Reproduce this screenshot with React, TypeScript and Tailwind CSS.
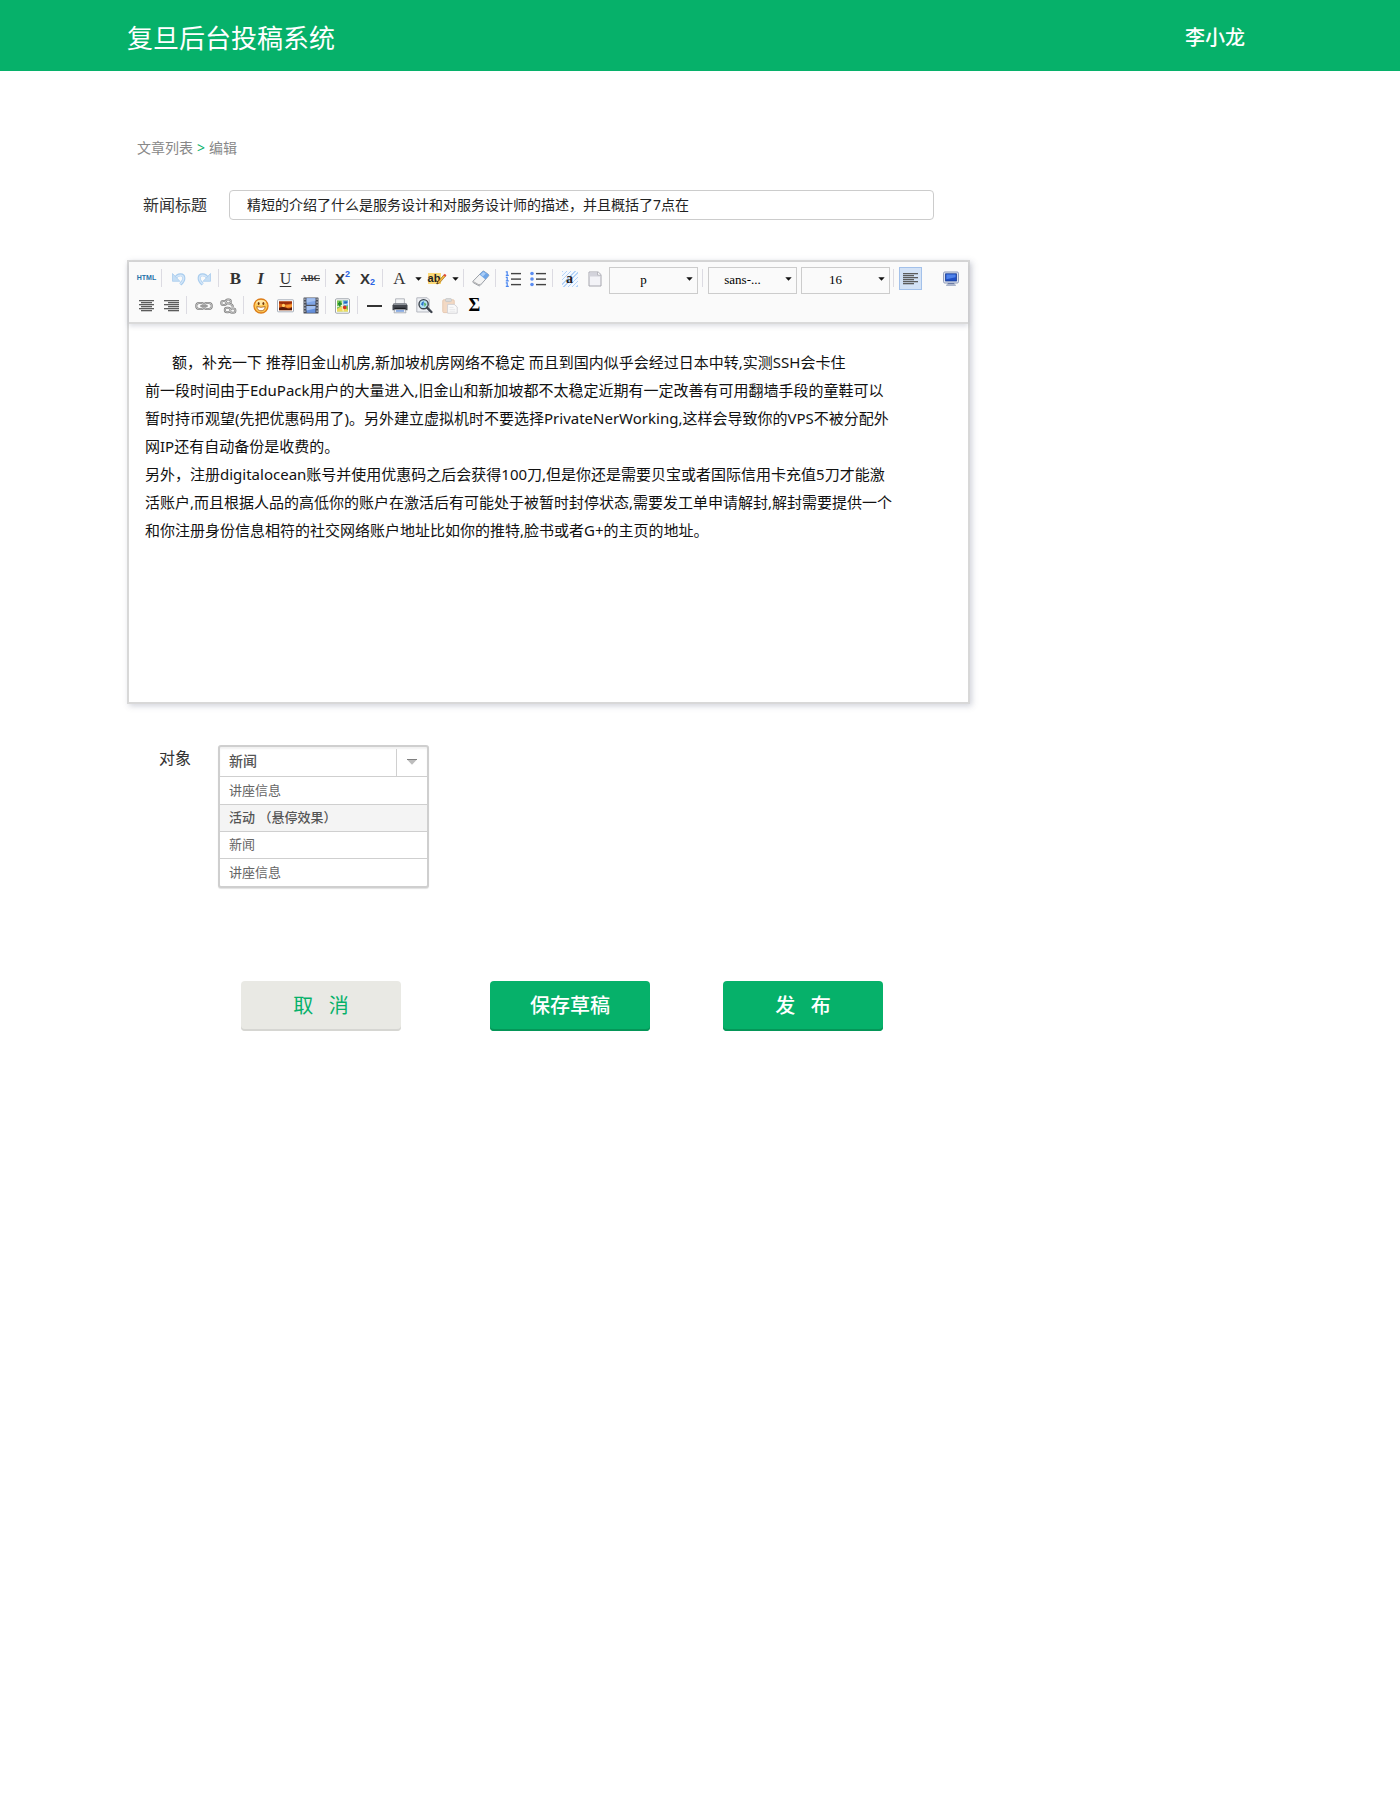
import React, { useState } from "react";

const ARTICLE = [
  "额，补充一下 推荐旧金山机房,新加坡机房网络不稳定 而且到国内似乎会经过日本中转,实测SSH会卡住",
  "前一段时间由于EduPack用户的大量进入,旧金山和新加坡都不太稳定近期有一定改善有可用翻墙手段的童鞋可以",
  "暂时持币观望(先把优惠码用了)。另外建立虚拟机时不要选择PrivateNerWorking,这样会导致你的VPS不被分配外",
  "网IP还有自动备份是收费的。",
  "另外，注册digitalocean账号并使用优惠码之后会获得100刀,但是你还是需要贝宝或者国际信用卡充值5刀才能激",
  "活账户,而且根据人品的高低你的账户在激活后有可能处于被暂时封停状态,需要发工单申请解封,解封需要提供一个",
  "和你注册身份信息相符的社交网络账户地址比如你的推特,脸书或者G+的主页的地址。",
].join("\n");

function Tool({ label, children }: { label: string; children: React.ReactNode }) {
  return (
    <button type="button" aria-label={label} title={label} className="flex h-[23px] w-[25px] shrink-0 items-center justify-center text-[#333]">
      {children}
    </button>
  );
}

function Arrow({ label }: { label: string }) {
  return (
    <button type="button" aria-label={label} className="flex h-[23px] w-3 shrink-0 items-center justify-center">
      <Caret />
    </button>
  );
}

function Caret() {
  return (
    <svg width="7" height="4" viewBox="0 0 7 4" aria-hidden="true">
      <path d="M0.3 0.3h6.4L3.5 3.8z" fill="#111" />
    </svg>
  );
}

function Sep() {
  return <span className="mt-0.5 mr-1 ml-0.5 h-[18px] w-px shrink-0 bg-[#dcdbe2]" />;
}

function ToolSelect({ label, options }: { label: string; options: string[] }) {
  return (
    <span className="relative block w-[89px] shrink-0">
      <select
        aria-label={label}
        className="block h-[27px] w-full appearance-none border border-[#ccc] bg-[#fafafa] pr-5 pb-0.5 text-center font-['Liberation_Serif',serif] text-[13px] text-black outline-none [text-align-last:center]"
      >
        {options.map((o) => (
          <option key={o}>{o}</option>
        ))}
      </select>
      <span className="pointer-events-none absolute top-[10px] right-[5px]">
        <Caret />
      </span>
    </span>
  );
}

function Undo({ flip = false }: { flip?: boolean }) {
  return (
    <svg width="16" height="14" viewBox="0 0 16 14" fill="none" aria-hidden="true">
      <g transform={flip ? "matrix(-1 0 0 1 16 0)" : undefined}>
        <path d="M4 6.6C6.500 1.800 12.600 1.600 12.900 6c.1 2.600-1.600 4.600-3.600 6.300" stroke="#a9cdee" strokeWidth="3" />
        <path d="M4.400 6.300C6.800 2.400 12.200 2.200 12.600 6c.1 2.400-1.500 4.300-3.200 5.900" stroke="#d3e6f9" strokeWidth="1.400" />
        <path d="M1.500 1.500v7.800h7.400z" fill="#c5def5" stroke="#a9cdee" strokeWidth="0.800" />
      </g>
    </svg>
  );
}

function Lines({ kind }: { kind: "left" | "center" | "right" }) {
  const short = kind === "left" ? 0 : kind === "center" ? 2 : 4;
  return (
    <svg width="15" height="12" viewBox="0 0 15 12" aria-hidden="true">
      {[0, 1, 2, 3, 4, 5].map((i) => (
        <rect key={i} x={i % 2 ? short : 0} y={i * 2} width={i % 2 ? 11 : 15} height="1.300" fill="#5c5c5c" />
      ))}
    </svg>
  );
}

function Eraser() {
  return (
    <svg width="18" height="17" viewBox="0 0 18 17" aria-hidden="true">
      <path d="M1 11.2 10.5 1.4Q11.2.7 12 1.3l4.4 3.1q.8.6.2 1.4l-8.4 9.6q-.6.7-1.4.3L1.3 12.7q-.9-.7-.3-1.5z" fill="#f4f4f4" stroke="#8f949c" strokeWidth="0.9" />
      <path d="m7.5 4.5 3.2-3.2q.6-.5 1.3 0l4.6 3.2q.6.6.1 1.3l-3.2 3.8z" fill="#6fa6e8" />
      <path d="m8.6 4.4 2.4-2.2q.4-.3.8 0l2 1.4-2.9 3z" fill="#a9cdf7" />
      <path d="m1.4 11.6 5.8 3.4 1-1.2" fill="none" stroke="#a5a5a5" strokeWidth="0.9" />
    </svg>
  );
}

function ListIcon({ ordered = false }: { ordered?: boolean }) {
  return (
    <svg width="16" height="16" viewBox="0 0 16 16" aria-hidden="true">
      {[2.5, 8, 13.5].map((y) => (
        <g key={y}>
          <rect x="6" y={y - 0.6} width="10" height="1.4" fill="#444" />
          {ordered ? (
            <path d={`M.8 ${y - 1.6}h1.4v3.2M.8 ${y + 1.8}h3`} stroke="#4a86f0" fill="none" strokeWidth="1.2" />
          ) : (
            <circle cx="2" cy={y} r="1.8" fill="#5b8df2" />
          )}
        </g>
      ))}
    </svg>
  );
}

function Doc() {
  return (
    <svg width="14" height="16" viewBox="0 0 14 16" aria-hidden="true">
      <path d="M1 1h9.2L13 3.6V15H1z" fill="#f3f3f7" stroke="#a6a6ae" />
      <path d="M1.5 1.5h8v3h3v1h-11z" fill="#d3d3db" />
      <path d="M9.6 1v3.2H13" fill="#fff" stroke="#a6a6ae" strokeWidth="0.8" />
    </svg>
  );
}

function Monitor() {
  return (
    <svg width="16" height="16" viewBox="0 0 16 16" aria-hidden="true">
      <rect x="0.6" y="1" width="14.8" height="11" rx="1.2" fill="#e6ebf5" stroke="#8a97b5" />
      <rect x="2.6" y="2.8" width="10.8" height="7.2" fill="#1f4fc4" stroke="#173a94" strokeWidth="0.8" />
      <path d="M3.4 3.6h9.2v2.6l-9.2 2z" fill="#4f82ea" />
      <path d="M5 12h6l1 1.6H4z" fill="#6b7ca6" />
      <rect x="3" y="13.4" width="10" height="1.5" rx="0.6" fill="#aab4ca" />
    </svg>
  );
}

function ChainLink() {
  return (
    <svg width="18" height="10" viewBox="0 0 18 10" fill="none" aria-hidden="true">
      <rect x="1.2" y="2" width="8" height="6" rx="3" stroke="#7e7e7e" strokeWidth="2" />
      <rect x="8.800" y="2" width="8" height="6" rx="3" stroke="#7e7e7e" strokeWidth="2" />
      <rect x="1.2" y="2" width="8" height="6" rx="3" stroke="#dcdcdc" strokeWidth="0.7" />
      <rect x="8.800" y="2" width="8" height="6" rx="3" stroke="#dcdcdc" strokeWidth="0.7" />
      <path d="M5.5 5h7" stroke="#777" strokeWidth="2.2" />
      <path d="M6 5h6" stroke="#cfcfcf" strokeWidth="0.8" />
    </svg>
  );
}

function Unlink() {
  return (
    <svg width="17" height="16" viewBox="0 0 17 16" fill="none" aria-hidden="true">
      {[
        { c: "#7e7e7e", w: 2 },
        { c: "#dedede", w: 0.7 },
      ].map(({ c, w }) => (
        <g key={c} stroke={c} strokeWidth={w}>
          <rect x="1.2" y="3" width="5" height="4" rx="2" />
          <rect x="5.800" y="1.500" width="5" height="4" rx="2" />
          <rect x="4.8" y="9.800" width="5.400" height="4.400" rx="2.200" />
          <rect x="10" y="10.400" width="5.400" height="4.400" rx="2.200" />
          <path d="M9.500 6q3.400.2 3.300 3" />
        </g>
      ))}
    </svg>
  );
}

function Smile() {
  return (
    <svg width="16" height="16" viewBox="0 0 16 16" aria-hidden="true">
      <circle cx="8" cy="8" r="7" fill="#ffcb58" stroke="#dd7d18" strokeWidth="1.3" />
      <ellipse cx="8" cy="4.6" rx="4.8" ry="2.6" fill="#ffe7a6" />
      <ellipse cx="5.6" cy="5.6" rx="1" ry="1.5" fill="#7a3b05" />
      <ellipse cx="10.4" cy="5.6" rx="1" ry="1.5" fill="#7a3b05" />
      <path d="M3.8 8.600Q8 10 12.200 8.600 11.800 12.800 8 12.800T3.800 8.600z" fill="#fff" stroke="#a65a14" strokeWidth="0.8" />
    </svg>
  );
}

function Picture() {
  return (
    <svg width="17" height="14" viewBox="0 0 17 14" aria-hidden="true">
      <rect x="0.5" y="0.8" width="16" height="12" rx="0.6" fill="#fff" stroke="#a9b0bb" />
      <rect x="2" y="2.4" width="13" height="8.8" fill="#d9641a" />
      <path d="M2 2.4h13v2L8 5.6 2 4.600z" fill="#9a2f0c" />
      <circle cx="6.500" cy="6.4" r="1.6" fill="#ffd06a" />
      <path d="M8 6.500l7-1.300v2.600l-5 1z" fill="#f79a32" />
      <path d="M2 8.800q4-1.600 7 0t6-.6v3H2z" fill="#5a1a08" />
    </svg>
  );
}

function Film() {
  return (
    <svg width="16" height="17" viewBox="0 0 16 17" aria-hidden="true">
      <rect x="0.5" y="0.5" width="15" height="16" rx="0.6" fill="#4a4e58" />
      <rect x="3.6" y="1.2" width="8.8" height="6.6" fill="#7fa5e6" />
      <rect x="3.6" y="9" width="8.8" height="6.8" fill="#6590dc" />
      <path d="M3.6 1.2h8.8v2.5l-8.8 2zM3.6 9h8.8v2.5l-8.8 2z" fill="#a3c0f0" />
      {[1.5, 4.5, 7.5, 10.5, 13.5].map((y) => (
        <g key={y} fill="#c9cdd6">
          <rect x="1.3" y={y} width="1.2" height="1.4" />
          <rect x="13.5" y={y} width="1.2" height="1.4" />
        </g>
      ))}
    </svg>
  );
}

function MapIcon() {
  return (
    <svg width="15" height="16" viewBox="0 0 15 16" aria-hidden="true">
      <rect x="0.5" y="0.8" width="14" height="14.4" rx="1.2" fill="#fff" stroke="#9fa4ab" />
      <rect x="2" y="2.4" width="11" height="11" fill="#7cc653" />
      <path d="M7.5 2.4H13v5L9 9z" fill="#66b4ea" />
      <path d="M2 11l5-3 6 4v1.400H2z" fill="#f0d95e" />
      <path d="M7.200 2.4l1 11M2 8.800l11-3" stroke="#fff" strokeWidth="0.8" />
      <path d="M4.800 3.400v5M3 5.900h3.600" stroke="#1f8a35" strokeWidth="1.6" />
      <circle cx="9.7" cy="9.4" r="1.800" fill="#d62f22" />
      <rect x="9.200" y="3.4" width="3" height="2" fill="#2a63b8" />
    </svg>
  );
}

function Printer() {
  return (
    <svg width="16" height="16" viewBox="0 0 16 16" aria-hidden="true">
      <path d="M3.6.8h8.8V6H3.6z" fill="#f4f5f7" stroke="#a3a7ad" strokeWidth="0.8" />
      <path d="M1.6 5.400h12.800l1.100 2v4.800H.5V7.400z" fill="#43474e" />
      <path d="M1.8 5.600h12.400l.6 1.400H1.200z" fill="#8d9299" />
      <path d="M2.5 9.800h11v1.600h-11z" fill="#111318" />
      <path d="M2.8 11.400h10.400l.8 3.400H2z" fill="#eceef2" stroke="#9da1a8" strokeWidth="0.8" />
      <path d="M4 12.300h8v1.300H4z" fill="#5f8fdc" />
    </svg>
  );
}

function Preview() {
  return (
    <svg width="17" height="17" viewBox="0 0 17 17" aria-hidden="true">
      <path d="M.8.8h10.400l2 2V15H.8z" fill="#eef0f4" stroke="#b5b8c0" />
      <circle cx="7.6" cy="7.2" r="4.6" fill="#b4e1f4" stroke="#3e444d" strokeWidth="1.4" />
      <path d="M5 7.500q.4-2.800 3-3.200L7.200 9z" fill="#2b74c9" />
      <path d="M8 5.500l2.500 1.500L8.600 10z" fill="#52b25b" />
      <path d="m11 10.600 4.400 4.400" stroke="#3e444d" strokeWidth="2.4" strokeLinecap="round" />
    </svg>
  );
}

function Paste() {
  return (
    <svg width="16" height="16" viewBox="0 0 16 16" aria-hidden="true">
      <rect x="0.8" y="1.8" width="11.4" height="12.8" rx="1" fill="#f3d9c4" stroke="#e6c9b3" />
      <rect x="3.6" y="0.6" width="5.800" height="3" rx="0.8" fill="#dcdcdc" stroke="#c4c4c4" strokeWidth="0.8" />
      <path d="M5.6 6.400h6.600l3 2.600v6.200H5.600z" fill="#fafafa" stroke="#cfcfd4" strokeWidth="0.9" />
      <path d="M7.5 9.400h4M7.500 11.400h5.800M7.500 13.200h5.800" stroke="#e2e2e6" strokeWidth="0.8" />
    </svg>
  );
}

function Highlighter() {
  return (
    <span className="relative flex h-[13px] w-[18px] items-center">
      <span className="flex h-[11px] w-[13px] items-center justify-center bg-[#fbd977] font-['Liberation_Sans',sans-serif] text-[11px] leading-none font-bold text-[#222]">
        ab
      </span>
      <svg className="absolute top-0 left-[7px]" width="12" height="13" viewBox="0 0 12 13" aria-hidden="true">
        <path d="M2 12 3 9.800 8.800 3l1.600 1.300-6 6.800z" fill="#f4b942" stroke="#9b6b1b" strokeWidth="0.7" />
        <path d="m8.400 3.200 1.300-1.500 1.800 1.500-1.200 1.500z" fill="#e2483a" />
        <path d="m1.200 12.300.9-2 1.300 1z" fill="#222" />
      </svg>
    </span>
  );
}

function Toolbar() {
  return (
    <div role="toolbar" aria-label="编辑工具栏" className="border-b-2 border-[#dadada] bg-[#fafafa] px-[5px] py-[5px] shadow-[0_2px_5px_rgba(70,80,110,0.2)]">
      <div className="flex h-[27px] items-start">
        <Tool label="HTML">
          <span className="font-['Liberation_Sans',sans-serif] text-[7px] font-bold text-[#2672a8]">HTML</span>
        </Tool>
        <Sep />
        <Tool label="撤销"><Undo /></Tool>
        <Tool label="重做"><Undo flip /></Tool>
        <Sep />
        <Tool label="加粗"><span className="font-['Liberation_Serif',serif] text-[17px] font-bold">B</span></Tool>
        <Tool label="斜体"><span className="font-['Liberation_Serif',serif] text-[17px] font-bold italic">I</span></Tool>
        <Tool label="下划线"><span className="font-['Liberation_Serif',serif] text-[16px] underline decoration-1 underline-offset-2">U</span></Tool>
        <Tool label="删除线"><span className="font-['Liberation_Serif',serif] text-[9px] font-bold line-through">ABC</span></Tool>
        <Sep />
        <Tool label="上标">
          <span className="flex font-['Liberation_Sans',sans-serif] text-[15px] leading-none font-bold">
            X<span className="text-[9px] leading-[6px] text-[#2b62e3]">2</span>
          </span>
        </Tool>
        <Tool label="下标">
          <span className="flex items-end font-['Liberation_Sans',sans-serif] text-[15px] leading-none font-bold">
            X<span className="text-[9px] leading-[7px] text-[#2b62e3]">2</span>
          </span>
        </Tool>
        <Sep />
        <Tool label="文字颜色"><span className="font-['Liberation_Serif',serif] text-[17px]">A</span></Tool>
        <Arrow label="选择文字颜色" />
        <Tool label="背景颜色"><Highlighter /></Tool>
        <Arrow label="选择背景颜色" />
        <Sep />
        <Tool label="清除格式"><Eraser /></Tool>
        <Sep />
        <Tool label="有序列表"><ListIcon ordered /></Tool>
        <Tool label="无序列表"><ListIcon /></Tool>
        <Sep />
        <Tool label="全选">
          <span className="flex size-4 items-center justify-center bg-[repeating-linear-gradient(135deg,#b5d3f7_0_1px,#f4f9ff_1px_3px)] font-['Liberation_Serif',serif] text-[14px] leading-none font-bold text-[#222]">
            a
          </span>
        </Tool>
        <Tool label="清空文档"><Doc /></Tool>
        <div className="ml-0.5 flex items-start">
          <ToolSelect label="段落格式" options={["p", "h1", "h2"]} />
        </div>
        <span className="mt-0.5 mr-[5px] ml-1 h-[18px] w-px shrink-0 bg-[#dcdbe2]" />
        <div className="flex gap-1">
          <ToolSelect label="字体" options={["sans-...", "serif"]} />
          <ToolSelect label="字号" options={["16", "14", "12"]} />
        </div>
        <span className="mt-0.5 mr-[5px] ml-[3px] h-[18px] w-px shrink-0 bg-[#dcdbe2]" />
        <button type="button" aria-label="左对齐" aria-pressed="true" className="flex size-[23px] shrink-0 items-center justify-center border border-[#a3c1ea] bg-[#d3e2f6]">
          <Lines kind="left" />
        </button>
        <span className="w-4" />
        <Tool label="全屏"><Monitor /></Tool>
      </div>
      <div className="flex h-[23px] items-start">
        <Tool label="居中对齐"><Lines kind="center" /></Tool>
        <Tool label="右对齐"><Lines kind="right" /></Tool>
        <Sep />
        <Tool label="超链接"><ChainLink /></Tool>
        <Tool label="取消链接"><Unlink /></Tool>
        <Sep />
        <Tool label="表情"><Smile /></Tool>
        <Tool label="图片"><Picture /></Tool>
        <Tool label="视频"><Film /></Tool>
        <Sep />
        <Tool label="地图"><MapIcon /></Tool>
        <Sep />
        <Tool label="分隔线"><span className="h-0.5 w-[15px] bg-[#333]" /></Tool>
        <Tool label="打印"><Printer /></Tool>
        <Tool label="预览"><Preview /></Tool>
        <Tool label="粘贴"><Paste /></Tool>
        <Tool label="公式"><span className="font-['Liberation_Serif',serif] text-[18px] font-bold text-black">Σ</span></Tool>
      </div>
    </div>
  );
}

const OPTIONS = ["讲座信息", "活动 （悬停效果）", "新闻", "讲座信息"];

function TargetPicker() {
  const [hovered, setHovered] = useState(1);
  return (
    <div className="w-[211px] overflow-hidden rounded-[3px] border-2 border-[#cfcfcf] bg-white shadow-[0_1px_1px_rgba(0,0,0,0.12)]">
      <button
        type="button"
        id="target"
        aria-haspopup="listbox"
        aria-expanded="true"
        className="flex h-[29px] w-full items-stretch text-left text-[14px] font-medium text-[#555] shadow-[inset_0_2px_2px_rgba(0,0,0,0.06)]"
      >
        <span className="flex flex-1 items-center pb-0.5 pl-[9px]">新闻</span>
        <span className="mt-0.5 flex w-[31px] items-center justify-center border-l border-[#d0d0d0] pb-0.5">
          <svg width="10" height="6" viewBox="0 0 10 6" aria-hidden="true">
            <path d="M0 .5h10L5 5.800z" fill="#bdbdbd" />
            <path d="M0 .5h10" stroke="#808080" strokeWidth="1" />
          </svg>
        </span>
      </button>
      <ul role="listbox" aria-labelledby="target-label">
        {OPTIONS.map((option, i) => (
          <li
            key={i}
            role="option"
            aria-selected={i === 2}
            onMouseEnter={() => setHovered(i)}
            className={
              i === hovered
                ? "flex h-[27px] items-center border-t border-[#cfcfcf] bg-[#f4f4f4] pl-[9px] text-[13px] font-medium text-[#555] first:h-7 last:h-7"
                : "flex h-[27px] items-center border-t border-[#cfcfcf] pl-[9px] text-[13px] text-[#666] first:h-7 last:h-7"
            }
          >
            {option}
          </li>
        ))}
      </ul>
    </div>
  );
}

export default function App() {
  return (
    <div className="min-h-screen bg-white font-['Noto_Sans','Noto_Sans_CJK_SC',sans-serif] text-[#333]">
      <header className="flex h-[71px] items-center justify-between bg-[#06b16a] pt-1 pr-[155px] pl-[127px] text-white">
        <h1 className="text-[26px] leading-none">复旦后台投稿系统</h1>
        <span className="text-[20px] leading-none font-medium">李小龙</span>
      </header>

      <main className="px-[127px] pt-[67px] pb-16">
        <nav aria-label="面包屑" className="flex gap-1 pl-2.5 text-[14px] leading-5 text-[#888]">
          <a href="#list">文章列表</a>
          <span className="text-[#06b16a]">&gt;</span>
          <span>编辑</span>
        </nav>

        <form onSubmit={(e) => e.preventDefault()}>
          <div className="mt-8 flex max-w-[807px] items-center pl-4">
            <label htmlFor="title" className="w-[86px] shrink-0 text-[16px] leading-6">
              新闻标题
            </label>
            <input
              id="title"
              type="text"
              defaultValue="精短的介绍了什么是服务设计和对服务设计师的描述，并且概括了7点在"
              className="h-[30px] min-w-0 flex-1 rounded border border-[#ccc] px-[17px] pb-0.5 text-[14px] text-[#222] outline-none"
            />
          </div>

          <div className="mt-10 max-w-[843px] border-2 border-[#d8d8d8] bg-white shadow-[2px_2px_6px_rgba(70,80,110,0.25)]">
            <Toolbar />
            <textarea
              aria-label="正文"
              defaultValue={ARTICLE}
              className="block h-[378px] w-full resize-none bg-transparent px-4 pt-6 indent-[27px] text-[15px] leading-7 text-[#111] outline-none"
            />
          </div>

          <div className="mt-[41px] flex items-start pl-8">
            <span id="target-label" className="w-[59px] shrink-0 pt-px text-[16px] leading-6">
              对象
            </span>
            <TargetPicker />
          </div>

          <div className="mt-[93px] flex gap-[73px] pl-[114px] text-[20px] font-medium whitespace-pre">
            <button type="button" className="mr-4 h-[50px] w-40 rounded bg-[#e9e9e4] font-normal text-[#06b16a] shadow-[inset_0_-2px_0_#d6d6d2]">
              取   消
            </button>
            <button type="button" className="h-[50px] w-40 rounded bg-[#06b16a] text-white shadow-[inset_0_-2px_0_#059658]">
              保存草稿
            </button>
            <button type="submit" className="h-[50px] w-40 rounded bg-[#06b16a] text-white shadow-[inset_0_-2px_0_#059658]">
              发   布
            </button>
          </div>
        </form>
      </main>
    </div>
  );
}
